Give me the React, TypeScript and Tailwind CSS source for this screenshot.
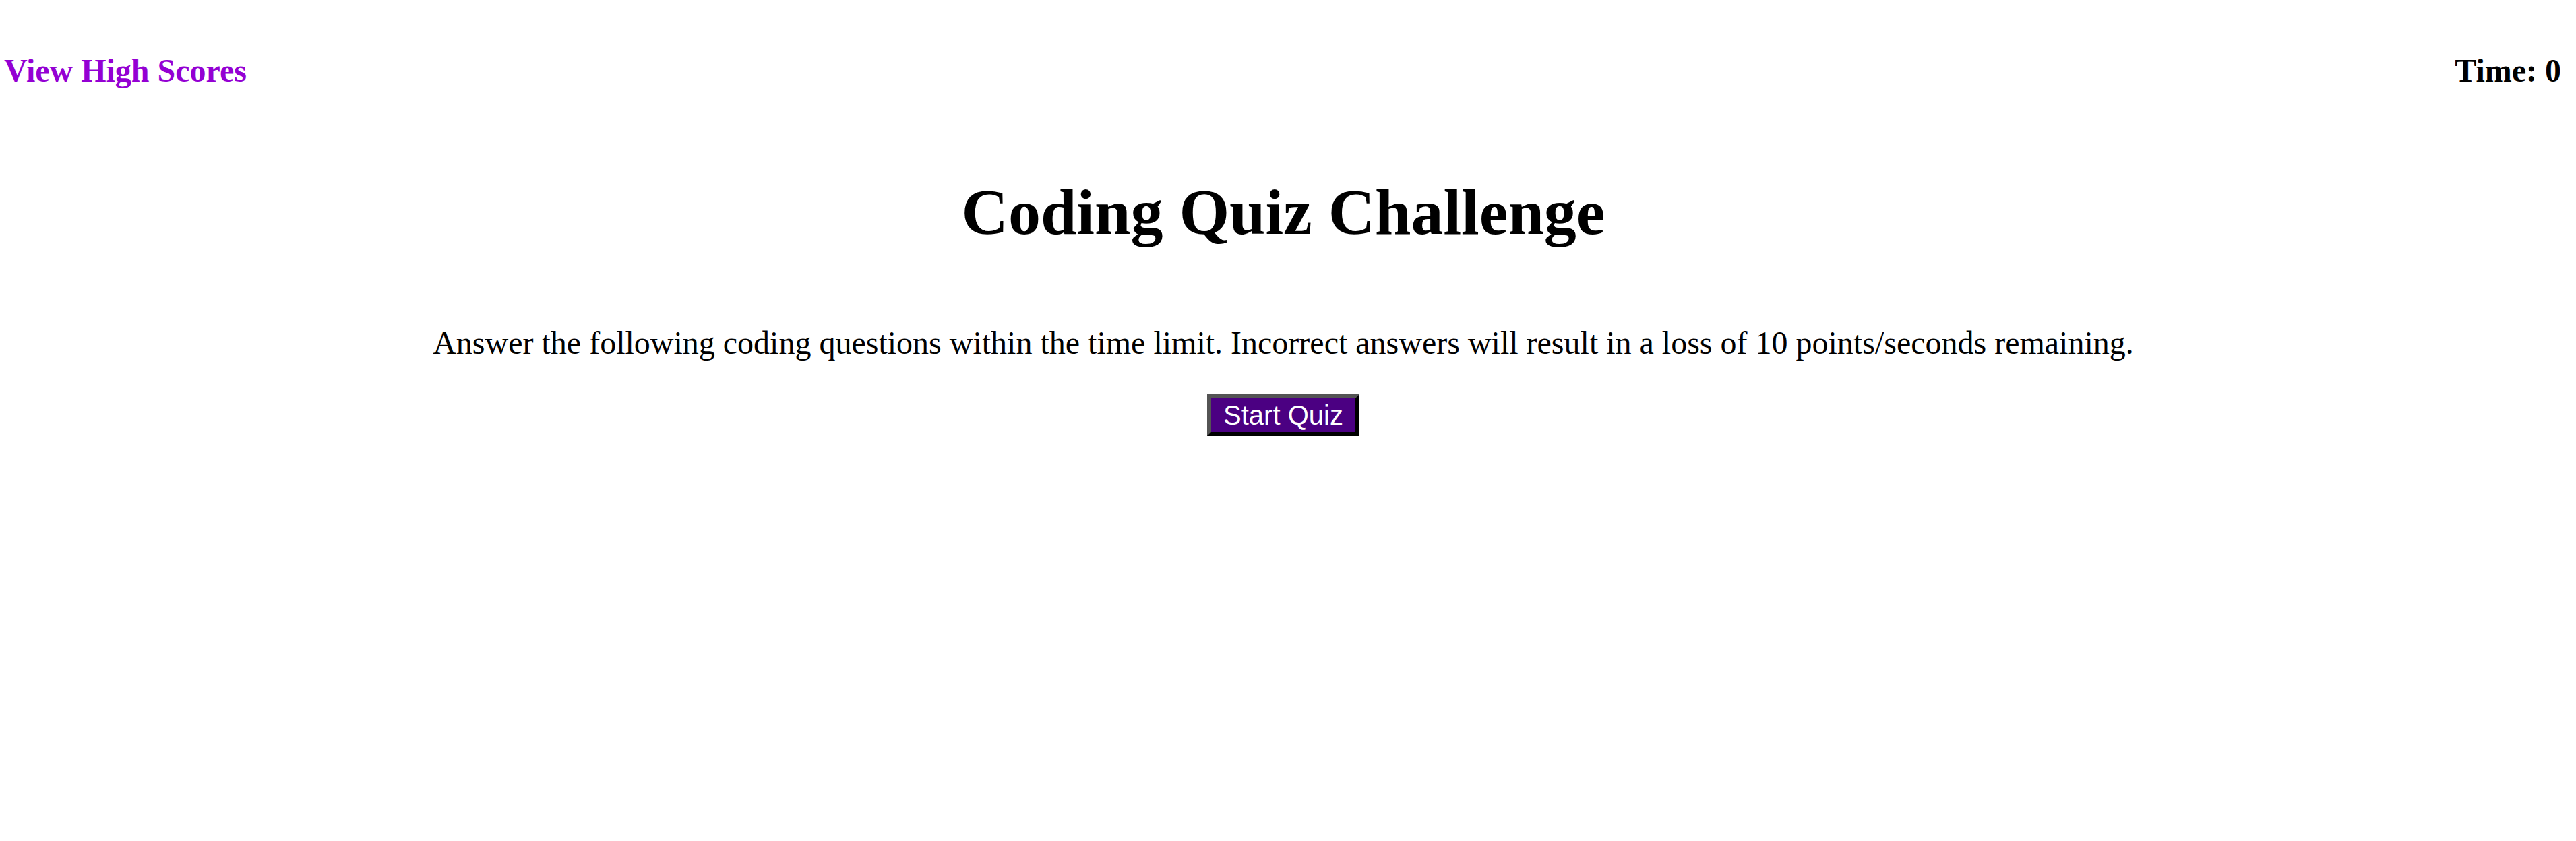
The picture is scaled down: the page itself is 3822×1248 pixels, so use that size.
export default function App() {
  return (
    <div className="min-h-screen bg-white pr-[14px] font-['Liberation_Serif','Times_New_Roman',serif] text-[48px] text-black">
      <header className="flex items-center justify-between pt-[77px] pl-[6px] pr-[8px]">
        <a className="font-bold leading-[55px] text-[#9400d3]">View High Scores</a>
        <div className="font-bold leading-[55px]">Time: 0</div>
      </header>
      <main className="flex flex-col items-center">
        <h1 className="mt-[128px] text-[96px] font-bold leading-[110px]">Coding Quiz Challenge</h1>
        <p className="mt-[111px] leading-[55px]">
          Answer the following coding questions within the time limit. Incorrect answers will result in a loss of 10
          points/seconds remaining.
        </p>
        <button className="mt-[49px] border-[6px] border-t-[#545454] border-l-[#545454] border-r-black border-b-black bg-[#4b0082] px-[18px] py-[3px] font-['Liberation_Sans',Arial,sans-serif] text-[40px] leading-[44px] text-white">
          Start Quiz
        </button>
      </main>
    </div>
  );
}
